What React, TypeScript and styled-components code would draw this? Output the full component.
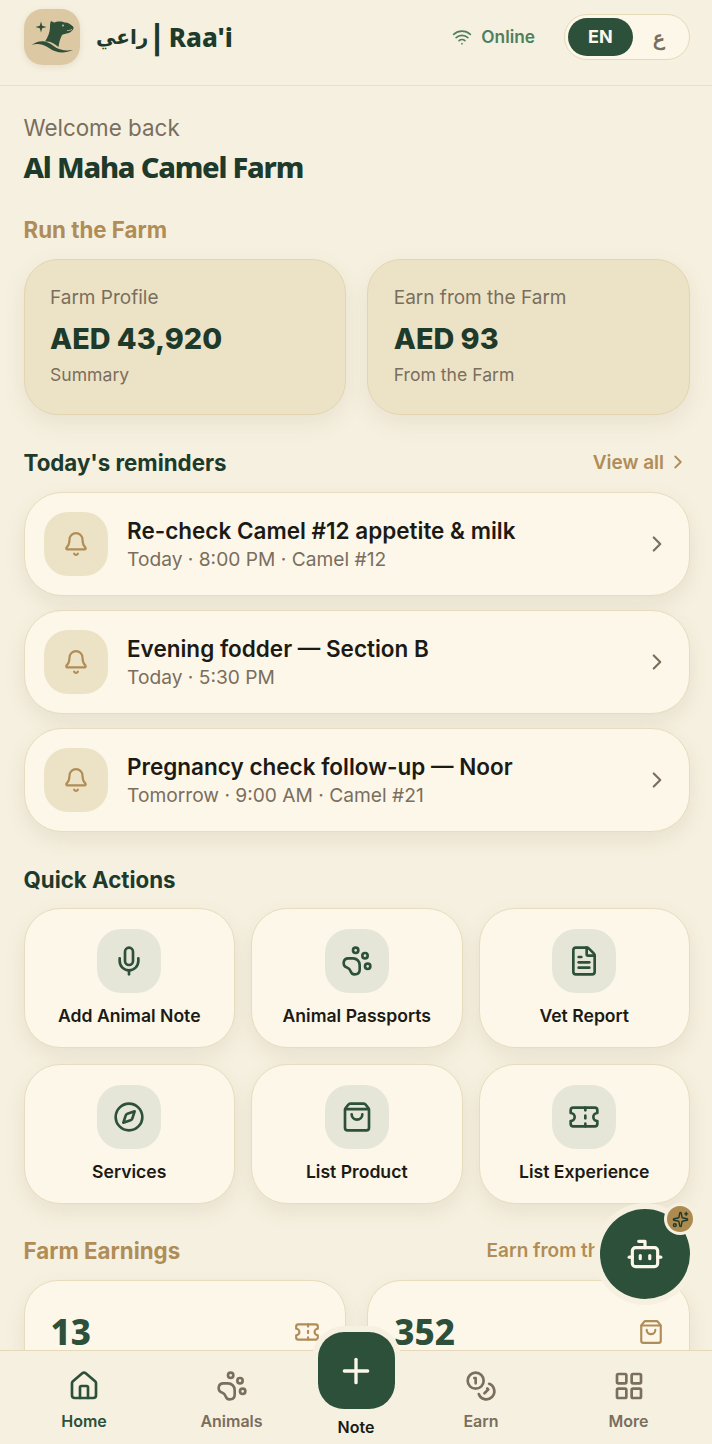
import React from 'react';
import styled, { createGlobalStyle } from 'styled-components';
import {
    Bell,
    Bot,
    ChevronRight,
    Coins,
    Compass,
    FileText,
    House,
    LayoutGrid,
    Mic,
    PawPrint,
    Plus,
    ShoppingBag,
    Sparkles,
    Ticket,
    Wifi,
} from 'lucide-react';

const GlobalStyle = createGlobalStyle`
    * {
        box-sizing: border-box;
    }
    html, body {
        margin: 0;
        height: 1444px;
        overflow: hidden;
        background: #f6f0e0;
        font-family: Inter, 'Noto Sans', sans-serif;
    }
`;

const display = `'Noto Sans', 'DejaVu Sans', sans-serif`;

const Page = styled.div`
    width: 712px;
    height: 1444px;
    overflow: hidden;
    background: #f6f0e0;
    position: relative;
`;

const Header = styled.header`
    height: 86px;
    padding: 0 22px 12px 24px;
    display: flex;
    align-items: center;
    border-bottom: 1px solid #e8dfc6;
`;

const LogoBox = styled.div`
    width: 56px;
    height: 56px;
    border-radius: 19px;
    background: #dcc9a3;
    box-shadow: 0 2px 6px rgba(120, 100, 60, 0.12);
`;

const Brand = styled.div`
    margin-left: 16px;
    display: flex;
    align-items: center;
    font-family: ${display};
    font-weight: 800;
    font-size: 26px;
    color: #1d3a2b;
    white-space: nowrap;
`;

const BrandArabic = styled.span`
    font-size: 20px;
    line-height: 36px;
    font-weight: 700;
`;

const BrandBar = styled.span`
    margin: 0 3px 0 0;
    font-size: 33px;
    line-height: 36px;
`;

const Online = styled.div`
    margin-left: auto;
    display: flex;
    align-items: center;
    gap: 9px;
    font-size: 17.3px;
    font-weight: 600;
    color: #4f7f5c;
`;

const LangSwitch = styled.div`
    margin-left: 29px;
    width: 126px;
    height: 46px;
    padding: 3px;
    border-radius: 23px;
    border: 1px solid #e6d9b9;
    background: #fdf7ea;
    display: flex;
    align-items: center;
`;

const LangActive = styled.div`
    width: 67px;
    height: 38px;
    border-radius: 19px;
    display: flex;
    align-items: center;
    justify-content: center;
    font-size: 18px;
    font-weight: 700;
    color: #fdf7ea;
    background: #2c5039;
`;

const LangOther = styled.div`
    width: 55px;
    height: 38px;
    padding-top: 3px;
    display: flex;
    align-items: center;
    justify-content: center;
    font-size: 20px;
    font-weight: 700;
    color: #7a6e5d;
`;

const Content = styled.main`
    padding: 28px 22px 0 23.5px;
    display: flex;
    flex-direction: column;
`;

const Welcome = styled.div`
    font-size: 22.4px;
    line-height: 28px;
    color: #7a6e5d;
`;

const FarmName = styled.h1`
    margin: 6px 0 0;
    font-family: ${display};
    font-size: 29px;
    line-height: 38px;
    font-weight: 800;
    letter-spacing: -1.2px;
    color: #1d3a2b;
`;

const SectionGold = styled.h2`
    margin: 0;
    font-size: 22.3px;
    line-height: 28px;
    font-weight: 700;
    color: #b08d57;
`;

const RunTitle = styled(SectionGold)`
    margin-top: 30px;
`;

const TwoCols = styled.div`
    margin-top: 15px;
    display: grid;
    grid-template-columns: 1fr 1fr;
    gap: 21px;
`;

const StatCard = styled.div`
    height: 156px;
    padding: 26px 26px 0 25.5px;
    border-radius: 34px;
    background: #ece3c7;
    border: 1px solid #e2d5b0;
    box-shadow: 0 8px 22px rgba(120, 100, 60, 0.1);
`;

const StatLabel = styled.div`
    font-size: 19px;
    line-height: 24px;
    color: #7a6e5d;
`;

const StatValue = styled.div`
    margin-top: 10px;
    font-size: 28.8px;
    line-height: 38px;
    font-weight: 800;
    color: #1d3a2b;
`;

const StatNote = styled.div`
    margin-top: 6px;
    font-size: 17.6px;
    line-height: 22px;
    color: #7a6e5d;
`;

const SectionHead = styled.div`
    margin-top: 34px;
    display: flex;
    align-items: center;
    justify-content: space-between;
`;

const SectionDark = styled.h2`
    margin: 0;
    font-size: 22.3px;
    line-height: 28px;
    font-weight: 700;
    color: #1d3a2b;
`;

const ViewAll = styled.div`
    padding: 0 1px 2px 0;
    display: flex;
    align-items: center;
    gap: 3px;
    font-size: 19px;
    font-weight: 600;
    color: #b08d57;
    white-space: nowrap;
`;

const EarnLink = styled(ViewAll)`
    padding-right: 3px;
`;

const ReminderList = styled.div`
    margin-top: 15px;
    display: flex;
    flex-direction: column;
    gap: 14px;
`;

const Reminder = styled.div`
    height: 104px;
    padding: 0 19px 0 19.5px;
    display: flex;
    align-items: center;
    border-radius: 38px;
    background: #fdf7ea;
    border: 1px solid #e8dcbd;
    box-shadow: 0 8px 20px rgba(120, 100, 60, 0.11);
`;

const ReminderIcon = styled.div`
    width: 64px;
    height: 64px;
    flex: none;
    border-radius: 24px;
    background: #ece3c7;
    color: #b08d57;
    display: flex;
    align-items: center;
    justify-content: center;
`;

const ReminderText = styled.div`
    margin-left: 19px;
    padding-top: 2px;
    flex: 1;
`;

const ReminderTitle = styled.div`
    font-size: 22.5px;
    line-height: 28px;
    font-weight: 600;
    color: #1c1a14;
`;

const ReminderMeta = styled.div`
    font-size: 19.2px;
    line-height: 28px;
    color: #7a6e5d;
`;

const QuickGrid = styled.div`
    margin-top: 14px;
    display: grid;
    grid-template-columns: repeat(3, 1fr);
    gap: 16px;
`;

const ActionCard = styled.div`
    height: 140px;
    padding-top: 20px;
    display: flex;
    flex-direction: column;
    align-items: center;
    border-radius: 36px;
    background: #fdf7ea;
    border: 1px solid #e8dcbd;
    box-shadow: 0 8px 20px rgba(120, 100, 60, 0.1);
`;

const ActionIcon = styled.div`
    width: 64px;
    height: 64px;
    border-radius: 24px;
    background: #e6e6d8;
    color: #2c5039;
    display: flex;
    align-items: center;
    justify-content: center;
`;

const ActionLabel = styled.div`
    margin-top: 12px;
    font-size: 17.6px;
    line-height: 22px;
    font-weight: 600;
    color: #1c1a14;
`;

const EarnHead = styled(SectionHead)`
    margin-top: 33px;
`;

const EarnCard = styled.div`
    height: 156px;
    padding: 29px 25px 0 26px;
    display: flex;
    align-items: flex-start;
    justify-content: space-between;
    border-radius: 34px;
    background: #fdf7ea;
    border: 1px solid #e8dcbd;
    color: #b08d57;
    box-shadow: 0 8px 20px rgba(120, 100, 60, 0.1);
    svg {
        margin-top: 9px;
    }
`;

const EarnValue = styled.div`
    font-family: ${display};
    font-size: 35px;
    line-height: 44px;
    font-weight: 800;
    color: #2c5039;
`;

const BottomNav = styled.nav`
    position: absolute;
    left: 0;
    right: 0;
    bottom: 0;
    height: 94px;
    display: grid;
    grid-template-columns: 168px 127px 122px 128px 167px;
    background: #f6f0e0;
    border-top: 1px solid #e6d9b9;
`;

const NavItem = styled.div<{ $active?: boolean }>`
    padding-top: 19px;
    display: flex;
    flex-direction: column;
    align-items: center;
    gap: 9px;
    font-size: 16px;
    line-height: 20px;
    font-weight: 600;
    color: ${(props) => (props.$active ? '#2c5039' : '#7a6e5d')};
`;

const NoteItem = styled.div`
    display: flex;
    flex-direction: column;
    align-items: center;
    font-size: 16px;
    line-height: 20px;
    font-weight: 600;
    color: #1c1a14;
`;

const NoteButton = styled.div`
    width: 77px;
    height: 77px;
    margin: -19px 0 8px;
    border-radius: 26px;
    background: #2c5039;
    color: #fdf7ea;
    box-shadow: 0 0 0 6px #f6f0e0;
    display: flex;
    align-items: center;
    justify-content: center;
`;

const Fab = styled.div`
    position: absolute;
    left: 600px;
    top: 1209px;
    width: 90px;
    height: 90px;
    border-radius: 50%;
    background: #2c5039;
    color: #fdf7ea;
    box-shadow: 0 0 0 6px #f6f0e0;
    display: flex;
    align-items: center;
    justify-content: center;
`;

const FabBadge = styled.div`
    position: absolute;
    right: -3px;
    top: -3px;
    width: 26px;
    height: 26px;
    border-radius: 50%;
    background: #ad8a4f;
    color: #1d3a2b;
    box-shadow: 0 0 0 3px #f6f0e0;
    display: flex;
    align-items: center;
    justify-content: center;
`;

const reminders = [
    { title: 'Re-check Camel #12 appetite & milk', meta: 'Today · 8:00 PM · Camel #12' },
    { title: 'Evening fodder — Section B', meta: 'Today · 5:30 PM' },
    { title: 'Pregnancy check follow-up — Noor', meta: 'Tomorrow · 9:00 AM · Camel #21' },
];

const actions = [
    { label: 'Add Animal Note', Icon: Mic },
    { label: 'Animal Passports', Icon: PawPrint },
    { label: 'Vet Report', Icon: FileText },
    { label: 'Services', Icon: Compass },
    { label: 'List Product', Icon: ShoppingBag },
    { label: 'List Experience', Icon: Ticket },
];

const Logo = () => (
    <svg width="56" height="56" viewBox="0 0 56 56" fill="#2f4f38">
        <path d="M17 12.500l1.200 4.300 4.300 1.200-4.300 1.200-1.200 4.300-1.200-4.300-4.300-1.200 4.300-1.200z" />
        <path d="M27 12l3 1.500c3-1.500 8-1.500 11 0 3 0 6 2 8.500 4.500.5 2-1.500 4-3.500 5.500-3 1.500-6 1-8 2.500-1.500 3-3 7-3.500 12-4.500-4-8.500-6-13.500-5.500 3-4.500 5-9.500 5-14.500 0-2 0-4 1-6z" />
        <path d="M7.500 36c5.500-4 11.500-5 17.500-2 6 3 9 9 24 7-9 4-17 3-24-2-6-4-12-5-17.500-3z" />
        <circle cx="39" cy="16.500" r="0.900" fill="#dcc9a3" />
        <path d="M43 21.500c2 .2 3.600-.2 5-1.200" fill="none" stroke="#dcc9a3" strokeWidth="0.800" />
    </svg>
);

export default function App() {
    return (
        <Page>
            <GlobalStyle />
            <Header>
                <LogoBox>
                    <Logo />
                </LogoBox>
                <Brand>
                    <BrandArabic>راعي</BrandArabic>
                    <BrandBar>|</BrandBar>
                    Raa'i
                </Brand>
                <Online>
                    <Wifi size={20} strokeWidth={2} />
                    Online
                </Online>
                <LangSwitch>
                    <LangActive>EN</LangActive>
                    <LangOther>ع</LangOther>
                </LangSwitch>
            </Header>
            <Content>
                <Welcome>Welcome back</Welcome>
                <FarmName>Al Maha Camel Farm</FarmName>
                <RunTitle>Run the Farm</RunTitle>
                <TwoCols>
                    <StatCard>
                        <StatLabel>Farm Profile</StatLabel>
                        <StatValue>AED 43,920</StatValue>
                        <StatNote>Summary</StatNote>
                    </StatCard>
                    <StatCard>
                        <StatLabel>Earn from the Farm</StatLabel>
                        <StatValue>AED 93</StatValue>
                        <StatNote>From the Farm</StatNote>
                    </StatCard>
                </TwoCols>
                <SectionHead>
                    <SectionDark>Today's reminders</SectionDark>
                    <ViewAll>
                        View all
                        <ChevronRight size={22} />
                    </ViewAll>
                </SectionHead>
                <ReminderList>
                    {reminders.map((item) => (
                        <Reminder key={item.title}>
                            <ReminderIcon>
                                <Bell size={26} strokeWidth={2} />
                            </ReminderIcon>
                            <ReminderText>
                                <ReminderTitle>{item.title}</ReminderTitle>
                                <ReminderMeta>{item.meta}</ReminderMeta>
                            </ReminderText>
                            <ChevronRight size={26} color="#7a6e5d" />
                        </Reminder>
                    ))}
                </ReminderList>
                <SectionHead>
                    <SectionDark>Quick Actions</SectionDark>
                </SectionHead>
                <QuickGrid>
                    {actions.map(({ label, Icon }) => (
                        <ActionCard key={label}>
                            <ActionIcon>
                                <Icon size={32} strokeWidth={2} />
                            </ActionIcon>
                            <ActionLabel>{label}</ActionLabel>
                        </ActionCard>
                    ))}
                </QuickGrid>
                <EarnHead>
                    <SectionGold>Farm Earnings</SectionGold>
                    <EarnLink>
                        Earn from the Farm
                        <ChevronRight size={22} />
                    </EarnLink>
                </EarnHead>
                <TwoCols>
                    <EarnCard>
                        <EarnValue>13</EarnValue>
                        <Ticket size={26} strokeWidth={2} />
                    </EarnCard>
                    <EarnCard>
                        <EarnValue>352</EarnValue>
                        <ShoppingBag size={26} strokeWidth={2} />
                    </EarnCard>
                </TwoCols>
            </Content>
            <Fab>
                <Bot size={38} strokeWidth={2} />
                <FabBadge>
                    <Sparkles size={17} strokeWidth={2} />
                </FabBadge>
            </Fab>
            <BottomNav>
                <NavItem $active>
                    <House size={32} strokeWidth={2} />
                    Home
                </NavItem>
                <NavItem>
                    <PawPrint size={32} strokeWidth={2} />
                    Animals
                </NavItem>
                <NoteItem>
                    <NoteButton>
                        <Plus size={40} strokeWidth={2} />
                    </NoteButton>
                    Note
                </NoteItem>
                <NavItem>
                    <Coins size={32} strokeWidth={2} />
                    Earn
                </NavItem>
                <NavItem>
                    <LayoutGrid size={32} strokeWidth={2} />
                    More
                </NavItem>
            </BottomNav>
        </Page>
    );
}
